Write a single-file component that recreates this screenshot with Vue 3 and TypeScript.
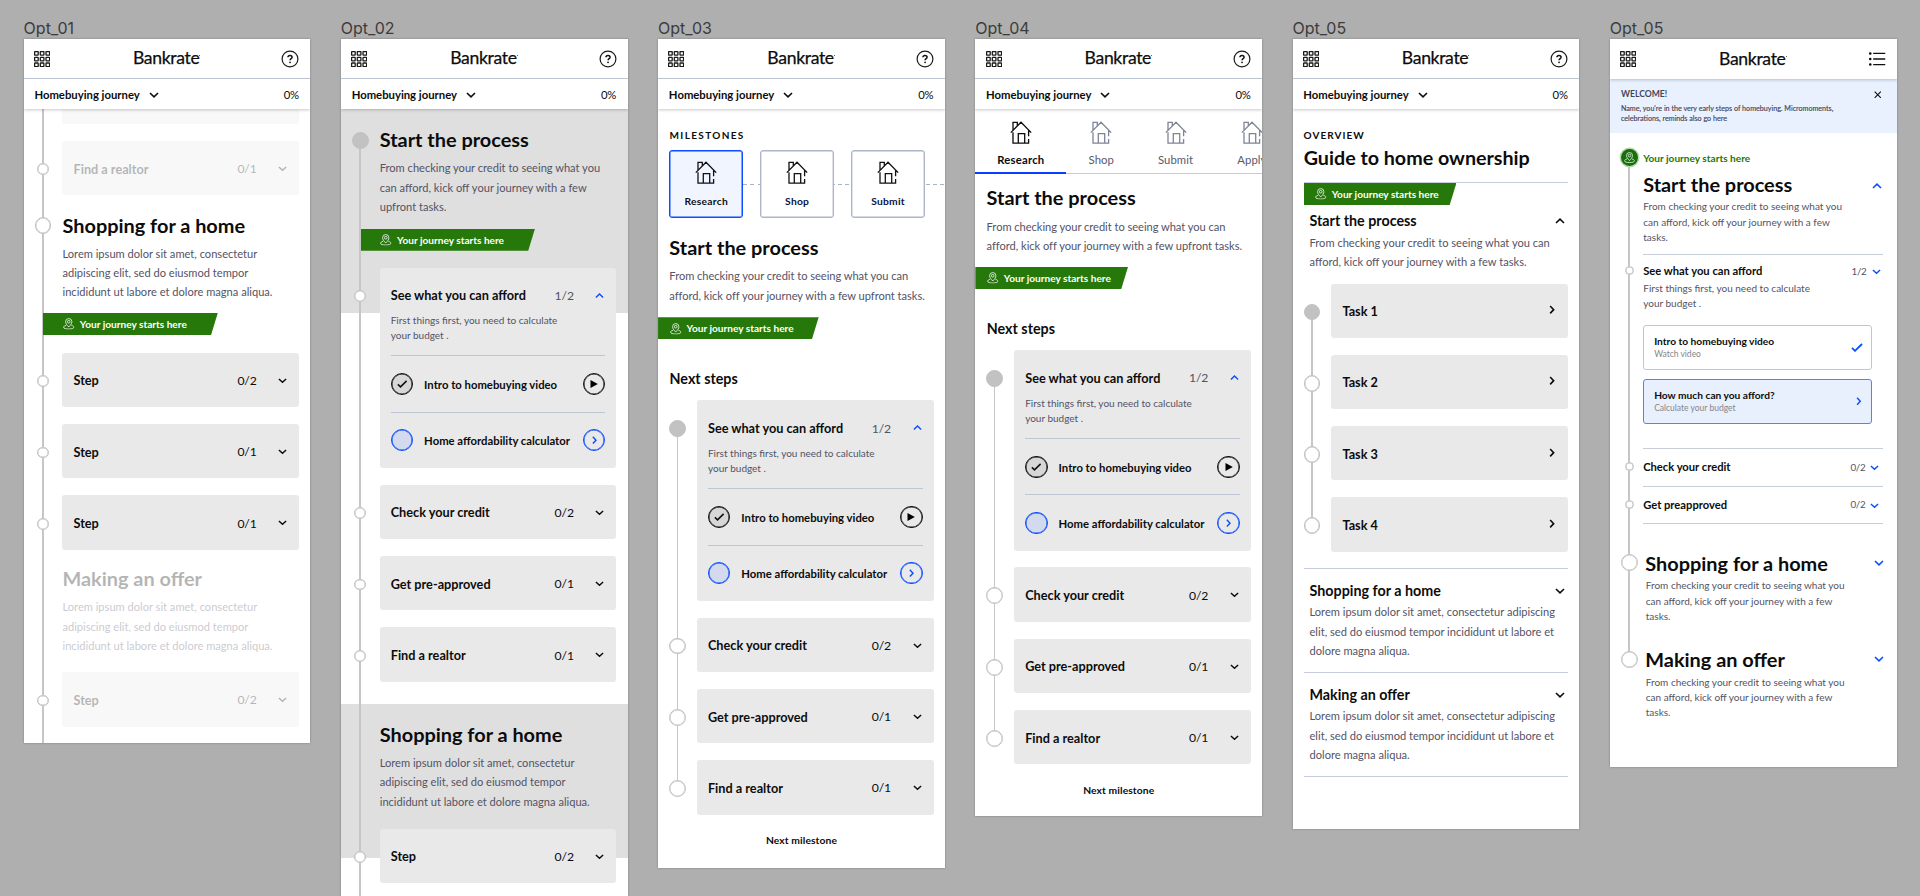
<script setup lang="ts">
interface Step { title: string; count: string; muted?: boolean }

const lorem = ['Lorem ipsum dolor sit amet, consectetur', 'adipiscing elit, sed do eiusmod tempor', 'incididunt ut labore et dolore magna aliqua.']
const loremWide = ['Lorem ipsum dolor sit amet, consectetur adipiscing', 'elit, sed do eiusmod tempor incididunt ut labore et', 'dolore magna aliqua.']
const fromChecking = ['From checking your credit to seeing what you can', 'afford, kick off your journey with a few upfront tasks.']
const fromShort = ['From checking your credit to seeing what you', 'can afford, kick off your journey with a few', 'tasks.']

const shopSteps: Step[] = [
  { title: 'Step', count: '0/2' },
  { title: 'Step', count: '0/1' },
  { title: 'Step', count: '0/1' },
]
const processSteps: Step[] = [
  { title: 'Check your credit', count: '0/2' },
  { title: 'Get pre-approved', count: '0/1' },
  { title: 'Find a realtor', count: '0/1' },
]
const tasks = ['Task 1', 'Task 2', 'Task 3', 'Task 4']
const milestones = ['Research', 'Shop', 'Submit']
const tabs = ['Research', 'Shop', 'Submit', 'Apply']
const sections = ['Shopping for a home', 'Making an offer']
const frames = [
  { id: 1, label: 'Opt_01' },
  { id: 2, label: 'Opt_02' },
  { id: 3, label: 'Opt_03' },
  { id: 4, label: 'Opt_04' },
  { id: 5, label: 'Opt_05' },
  { id: 6, label: 'Opt_05' },
]
</script>

<template>
  <div class="board">
    <svg class="defs" width="0" height="0">
      <symbol id="grid" viewBox="0 0 16 16">
        <g fill="none" stroke="#1b1b1b" stroke-width="1.3">
          <template v-for="y in 3" :key="y">
            <rect v-for="x in 3" :key="x" :x="(x - 1) * 5.7 + 0.6" :y="(y - 1) * 5.7 + 0.6" width="3.6" height="3.6" rx=".5" />
          </template>
        </g>
      </symbol>
      <symbol id="help" viewBox="0 0 18 18">
        <circle cx="9" cy="9" r="7.9" fill="none" stroke="#1b1b1b" stroke-width="1.2" />
        <path d="M6.9 7.3c.1-1.3 1-1.9 2.1-1.9 1.2 0 2.1.7 2.1 1.8 0 1.5-2 1.5-2 3.1" fill="none" stroke="#111" stroke-width="1.5" />
        <circle cx="9.05" cy="12.3" r=".9" fill="#111" />
      </symbol>
      <symbol id="list" viewBox="0 0 17 14">
        <path d="M4.3 1.2H17M4.3 7H17M4.3 12.8H17" stroke="#111" stroke-width="1.3" />
        <circle cx="1.3" cy="1.3" r="1.3" /><circle cx="1.3" cy="7" r="1.3" /><circle cx="1.3" cy="12.7" r="1.3" />
      </symbol>
      <symbol id="down" viewBox="0 0 10 6">
        <path d="M1 1l4 3.8L9 1" fill="none" stroke="currentColor" stroke-width="1.6" />
      </symbol>
      <symbol id="right" viewBox="0 0 6 10">
        <path d="M1 1l3.8 4L1 9" fill="none" stroke="currentColor" stroke-width="1.7" />
      </symbol>
      <symbol id="tick" viewBox="0 0 12 9">
        <path d="M1 4.900l3 2.900L11 1" fill="none" stroke="currentColor" stroke-width="1.8" />
      </symbol>
      <symbol id="cross" viewBox="0 0 8 8">
        <path d="M.7.7l6.600 6.600M7.300.7L.7 7.300" stroke="#111" stroke-width="1.200" />
      </symbol>
      <symbol id="house" viewBox="0 0 22 23">
        <path d="M.8 11.6L11 1.2l10.2 10.4M3 9.3V1.4h4.3v3.2M3 11.2v10.9h15.6v-4M18.6 9.5v5.7M8.3 22V12.7h6.4V22" fill="none" stroke="currentColor" stroke-width="1.3" />
      </symbol>
      <symbol id="pin" viewBox="0 0 12 12">
        <g fill="none" stroke="currentColor" stroke-width=".8">
          <path d="M6 9.4C4 7.2 2.7 5.7 2.7 3.9a3.3 3.3 0 016.6 0C9.300 5.700 8 7.200 6 9.400z" />
          <circle cx="6" cy="3.9" r="1.4" />
          <path d="M3.300 7.600C1.600 8 .6 8.800.6 9.600c0 1.200 2.200 1.900 5.400 1.900s5.400-.7 5.400-1.900c0-.8-1-1.600-2.700-2" />
        </g>
      </symbol>
    </svg>

    <section v-for="f in frames" :key="f.id" class="option">
      <div class="label">{{ f.label }}</div>
      <div class="frame" :class="'frame-' + f.id">
        <header class="top">
          <svg class="i-grid"><use href="#grid" /></svg>
          <span class="logo">Bankrate<i></i></span>
          <svg v-if="f.id !== 6" class="i-help"><use href="#help" /></svg>
          <svg v-else class="i-list"><use href="#list" /></svg>
        </header>
        <div v-if="f.id !== 6" class="journey">
          <b>Homebuying journey</b>
          <svg class="i-down"><use href="#down" /></svg>
          <span>0%</span>
        </div>

        <!-- Continuous timeline, scrolled into the second stage -->
        <div v-if="f.id === 1" class="track full">
          <div class="row muted"><span></span><div class="card clipped"></div></div>
          <div class="row">
            <span class="node"></span>
            <div class="card muted"><div class="head"><b>Find a realtor</b><em>0/1</em><svg class="chev"><use href="#down" /></svg></div></div>
          </div>
          <div class="row intro">
            <span class="node big"></span>
            <div><h2>Shopping for a home</h2><p class="copy"><span v-for="l in lorem" :key="l">{{ l }}</span></p></div>
          </div>
          <div class="ribbon inset"><svg><use href="#pin" /></svg>Your journey starts here</div>
          <div v-for="(s, i) in shopSteps" :key="i" class="row">
            <span class="node"></span>
            <div class="card"><div class="head"><b>{{ s.title }}</b><em>{{ s.count }}</em><svg class="chev"><use href="#down" /></svg></div></div>
          </div>
          <div class="row intro last">
            <span></span>
            <div class="muted"><h2>Making an offer</h2><p class="copy"><span v-for="l in lorem" :key="l">{{ l }}</span></p></div>
          </div>
          <div class="row">
            <span class="node"></span>
            <div class="card muted"><div class="head"><b>Step</b><em>0/2</em><svg class="chev"><use href="#down" /></svg></div></div>
          </div>
        </div>

        <!-- Timeline with shaded stage bands -->
        <div v-if="f.id === 2" class="track banded">
          <div class="band first">
            <div class="row intro">
              <span class="node big on"></span>
              <div>
                <h2>Start the process</h2>
                <p class="copy"><span>From checking your credit to seeing what you</span><span>can afford, kick off your journey with a few</span><span>upfront tasks.</span></p>
              </div>
            </div>
            <div class="ribbon inset"><svg><use href="#pin" /></svg>Your journey starts here</div>
          </div>
          <div class="row lead">
            <span class="node"></span>
            <div class="card">
              <div class="head"><b>See what you can afford</b><em class="soft">1/2</em><svg class="chev up blue"><use href="#down" /></svg></div>
              <p class="note"><span>First things first, you need to calculate</span><span>your budget .</span></p>
              <div class="task"><span class="ring done"><svg class="i-tick"><use href="#tick" /></svg></span><b>Intro to homebuying video</b><span class="ring"><svg class="i-play" viewBox="0 0 8 8"><path d="M.5 0L7.800 4 .5 8z" /></svg></span></div>
              <div class="task"><span class="ring todo"></span><b>Home affordability calculator</b><span class="ring go"><svg class="i-right"><use href="#right" /></svg></span></div>
            </div>
          </div>
          <div v-for="s in processSteps" :key="s.title" class="row">
            <span class="node"></span>
            <div class="card"><div class="head"><b>{{ s.title }}</b><em>{{ s.count }}</em><svg class="chev"><use href="#down" /></svg></div></div>
          </div>
          <div class="band second">
            <div class="row intro">
              <span></span>
              <div><h2>Shopping for a home</h2><p class="copy"><span v-for="l in lorem" :key="l">{{ l }}</span></p></div>
            </div>
          </div>
          <div class="row lead">
            <span class="node"></span>
            <div class="card"><div class="head"><b>Step</b><em>0/2</em><svg class="chev"><use href="#down" /></svg></div></div>
          </div>
        </div>

        <!-- Milestone cards / tabs with a step list -->
        <template v-if="f.id === 3 || f.id === 4">
          <template v-if="f.id === 3">
            <h4>MILESTONES</h4>
            <div class="stones">
              <div v-for="(m, i) in milestones" :key="m" class="stone" :class="{ on: i === 0 }"><svg class="i-house"><use href="#house" /></svg><b>{{ m }}</b></div>
            </div>
          </template>
          <div v-else class="tabs">
            <div v-for="(t, i) in tabs" :key="t" class="tab" :class="['w' + i, { on: i === 0 }]"><svg class="i-house"><use href="#house" /></svg><span>{{ t }}</span></div>
          </div>
          <div class="lede">
            <h2>Start the process</h2>
            <p class="copy"><span v-for="l in fromChecking" :key="l">{{ l }}</span></p>
          </div>
          <div class="ribbon"><svg><use href="#pin" /></svg>Your journey starts here</div>
          <h3 class="next">Next steps</h3>
          <div class="track linked">
            <div class="row">
              <span class="node big on"></span>
              <div class="card">
                <div class="head"><b>See what you can afford</b><em class="soft">1/2</em><svg class="chev up blue"><use href="#down" /></svg></div>
                <p class="note"><span>First things first, you need to calculate</span><span>your budget .</span></p>
                <div class="task"><span class="ring done"><svg class="i-tick"><use href="#tick" /></svg></span><b>Intro to homebuying video</b><span class="ring"><svg class="i-play" viewBox="0 0 8 8"><path d="M.5 0L7.800 4 .5 8z" /></svg></span></div>
                <div class="task"><span class="ring todo"></span><b>Home affordability calculator</b><span class="ring go"><svg class="i-right"><use href="#right" /></svg></span></div>
              </div>
            </div>
            <div v-for="s in processSteps" :key="s.title" class="row">
              <span class="node big"></span>
              <div class="card"><div class="head"><b>{{ s.title }}</b><em>{{ s.count }}</em><svg class="chev"><use href="#down" /></svg></div></div>
            </div>
          </div>
          <div class="more">Next milestone</div>
        </template>

        <!-- Accordion overview -->
        <template v-if="f.id === 5">
          <h4>OVERVIEW</h4>
          <h2 class="guide">Guide to home ownership</h2>
          <div class="acc open">
            <div class="ribbon"><svg><use href="#pin" /></svg>Your journey starts here</div>
            <div class="acc-head"><h3>Start the process</h3><svg class="i-acc up"><use href="#down" /></svg></div>
            <p class="copy"><span>From checking your credit to seeing what you can</span><span>afford, kick off your journey with a few tasks.</span></p>
          </div>
          <div class="track linked">
            <div v-for="(t, i) in tasks" :key="t" class="row">
              <span class="node big" :class="{ on: i === 0 }"></span>
              <div class="card"><div class="head"><b>{{ t }}</b><svg class="i-go"><use href="#right" /></svg></div></div>
            </div>
          </div>
          <div v-for="s in sections" :key="s" class="acc">
            <div class="acc-head"><h3>{{ s }}</h3><svg class="i-acc"><use href="#down" /></svg></div>
            <p class="copy"><span v-for="l in loremWide" :key="l">{{ l }}</span></p>
          </div>
          <div class="end-rule"></div>
        </template>

        <!-- Compact list with welcome banner -->
        <template v-if="f.id === 6">
          <div class="banner">
            <div><strong>WELCOME!</strong><p><span>Name, you're in the very early steps of homebuying. Micromoments,</span><span>celebrations, reminds also go here</span></p></div>
            <svg class="i-cross"><use href="#cross" /></svg>
          </div>
          <div class="track compact">
            <div class="crow start"><span class="here"><svg><use href="#pin" /></svg></span><b>Your journey starts here</b></div>
            <div class="crow stage"><span></span><h2>Start the process</h2><svg class="i-acc up blue"><use href="#down" /></svg></div>
            <p class="mini"><span v-for="l in fromShort" :key="l">{{ l }}</span></p>
            <div class="crow item tall"><span class="node tiny"></span><b>See what you can afford</b><em>1/2</em><svg class="chev blue"><use href="#down" /></svg></div>
            <p class="mini tight"><span>First things first, you need to calculate</span><span>your budget .</span></p>
            <div class="tile"><div><b>Intro to homebuying video</b><small>Watch video</small></div><svg class="i-check"><use href="#tick" /></svg></div>
            <div class="tile hot"><div><b>How much can you afford?</b><small>Calculate your budget</small></div><svg class="i-next"><use href="#right" /></svg></div>
            <div class="items">
              <div class="crow item"><span class="node tiny"></span><b>Check your credit</b><em>0/2</em><svg class="chev blue"><use href="#down" /></svg></div>
              <div class="crow item"><span class="node tiny"></span><b>Get preapproved</b><em>0/2</em><svg class="chev blue"><use href="#down" /></svg></div>
            </div>
            <div v-for="s in sections" :key="s" class="later">
              <div class="crow stage"><span class="node big"></span><h2>{{ s }}</h2><svg class="i-acc blue"><use href="#down" /></svg></div>
              <p class="mini"><span v-for="l in fromShort" :key="l">{{ l }}</span></p>
            </div>
          </div>
        </template>
      </div>
    </section>
  </div>
</template>

<style>
html, body { margin: 0; background: #afafaf; overflow: hidden; }
</style>

<style scoped>
.board { width: 1920px; height: 896px; box-sizing: border-box; padding-left: 23.6px; display: flex; align-items: flex-start; gap: 30.45px; overflow: hidden; background: #afafaf; font-family: Lato, "Liberation Sans", sans-serif; color: #0c0c0c; white-space: nowrap; }
.defs { position: absolute; }
svg { display: block; flex: none; overflow: visible; }
h2, h3, h4, p { margin: 0; }
em { font-style: normal; }
p span { display: block; }
.blue { color: #0b4dff !important; }
.up { transform: scaleY(-1); }

.option { width: 286.8px; flex: none; }
.label { height: 39px; box-sizing: border-box; padding-top: 18px; font: 400 16px/21px Inter, sans-serif; color: #3c3c3c; }
.frame { background: #fff; overflow: hidden; box-shadow: 0 0 2px rgba(0, 0, 0, .3); display: flow-root; }
.frame-1 { height: 703.5px; }
.frame-2 { height: 900px; }
.frame-3 { height: 829px; }
.frame-4 { height: 777px; }
.frame-5 { height: 790px; }
.frame-6 { height: 727.5px; }

.top { height: 40px; box-sizing: border-box; border-bottom: 1px solid #c3cdda; display: flex; align-items: center; padding: 0 11px 0 10.3px; }
.i-grid { width: 16px; height: 16px; }
.logo { flex: 1; padding-left: 83px; font-size: 17.6px; line-height: 24px; letter-spacing: -.34px; margin-top: -1px; -webkit-text-stroke: .25px #111; }
.logo i { display: inline-block; width: 1px; height: 1px; background: #666; vertical-align: 8px; }
.i-help { width: 18px; height: 18px; }
.i-list { width: 16.5px; height: 14px; }
.journey { position: relative; z-index: 3; height: 30px; background: #fff; box-shadow: 0 1px 3px rgba(0, 0, 0, .22); display: flex; align-items: center; padding: 0 11.5px 0 10.8px; font-size: 11.3px; }
.journey span { margin-left: auto; letter-spacing: -.2px; }
.i-down { width: 10px; height: 6px; margin: 1px 0 0 9px; }

h2 { font-size: 19.9px; line-height: 26px; font-weight: 700; }
h3 { font-size: 14.3px; line-height: 20px; font-weight: 700; }
h4 { font-size: 10px; line-height: 14px; font-weight: 700; letter-spacing: 1.35px; margin: 19px 0 0 11.5px; }
.frame-5 h4 { letter-spacing: 1.05px; margin-left: 11px; }
.copy { font-size: 11.1px; line-height: 19.33px; color: #535365; margin-top: 6.2px; }

.track { position: relative; z-index: 1; }
.track::before { content: ""; position: absolute; z-index: -1; left: 18.6px; width: 1.6px; top: 0; bottom: 0; background: #c6c6c6; }
.row { display: grid; grid-template-columns: 38.9px 236.6px; align-items: start; }
.row + .row { margin-top: 16.9px; }
.node { box-sizing: border-box; width: 11.6px; height: 11.6px; border: 1px solid #c2c2c2; box-shadow: inset 0 0 0 .5px #c2c2c2; border-radius: 50%; background: #fff; justify-self: center; margin-top: 22.6px; }
.node.big { width: 16.8px; height: 16.8px; margin-top: 20px; }
.node.on { background: #c2c2c2; }
.node.tiny { width: 9px; height: 9px; margin-top: 0; }
.card { background: #e9e9e9; border-radius: 3px; min-height: 54.4px; }
.muted { opacity: .3; }
.head { height: 54.4px; display: flex; align-items: center; padding: 1px 12px 0 11px; box-sizing: border-box; }
.head b { flex: 1; font-size: 12.7px; }
.head em { font-size: 12.2px; letter-spacing: -.15px; margin-right: 21.5px; }
.head em.soft { color: #535365; }
.chev { width: 9px; height: 5.4px; }
.note { padding: 0 11px; margin-top: -9px; font-size: 10px; line-height: 15.3px; color: #535365; height: 42.6px; }
.task { margin: 0 11px; height: 56.2px; box-sizing: border-box; border-top: 1px solid #bfc6d3; display: flex; align-items: center; }
.task b { flex: 1; font-size: 11.3px; margin: 1px 0 0 11px; }
.ring { width: 22.4px; height: 22.4px; box-sizing: border-box; border: 1px solid currentColor; box-shadow: inset 0 0 0 .5px currentColor; color: #111; border-radius: 50%; display: grid; place-items: center; }
.ring.done { background: #d7d7d7; }
.ring.todo { background: #d4daee; color: #0b4dff; }
.ring.go { color: #0b4dff; }
.i-tick { width: 10.5px; height: 8px; }
.i-play { width: 8px; height: 8px; }
.i-right { width: 5px; height: 8.4px; }

.ribbon { width: 160.6px; height: 22.2px; box-sizing: border-box; background: #26780b; color: #fff; clip-path: polygon(0 0, 100% 0, calc(100% - 6.8px) 100%, 0 100%); display: flex; align-items: center; gap: 5.5px; padding-left: 11.5px; font-size: 10.1px; font-weight: 700; }
.ribbon svg { width: 11.5px; height: 11.5px; }
.ribbon.inset { margin-left: 19.2px; width: 175px; padding-left: 20px; }
.frame-4 .ribbon { width: 152.7px; }

.frame-1 .clipped { min-height: 15px; height: 15px; border-radius: 0 0 3px 3px; }
.frame-1 .full { height: 634px; }
.frame-1 .intro .node { margin-top: 5.2px; }
.frame-1 .intro { margin-top: 16.3px; height: 101.5px; }
.frame-1 .ribbon + .row { margin-top: 17.5px; }
.frame-1 .intro.last { margin-top: 15.5px; height: 107px; }
.frame-1 .intro.last + .row { margin-top: 0; }

.banded { height: 830px; }
.banded::before { top: 31px; z-index: 1; }
.banded .node { position: relative; z-index: 2; }
.band { background: #dfdfdf; overflow: hidden; }
.band.first { height: 204px; }
.band.first .intro { margin-top: 17px; height: 102.5px; }
.band.first .node { margin-top: 6px; }
.row.lead { margin-top: -45.5px; }
.band.second { height: 154.5px; margin-top: 22px; }
.band.second .intro { margin-top: 17px; }
.band.second + .row.lead { margin-top: -29.7px; }

.stones { display: flex; gap: 16.9px; margin: 8px 0 0 11.2px; position: relative; z-index: 1; }
.stones::before { content: ""; position: absolute; z-index: -1; left: 74px; right: 1px; top: 33.5px; height: 1.5px; background: repeating-linear-gradient(90deg, #a9b3c7 0 4px, transparent 4px 7.3px); }
.stone { width: 74px; height: 68px; flex: none; box-sizing: border-box; border: 1px solid #adb5c9; box-shadow: inset 0 0 0 .4px #adb5c9; border-radius: 3px; background: #fff; display: flex; flex-direction: column; align-items: center; padding-top: 10px; color: #111; }
.stone.on { border-color: #0b4dff; box-shadow: inset 0 0 0 .5px #0b4dff; background: #f1f5ff; }
.stone b { font-size: 10.3px; line-height: 14px; letter-spacing: .25px; margin-top: 10px; color: #0a1440; }
.stone.on b { color: #111; }
.i-house { width: 22px; height: 23px; }
.tabs { display: flex; height: 65px; box-sizing: border-box; border-bottom: 1px solid #c3cdda; }
.tab { flex: none; display: flex; flex-direction: column; align-items: center; padding-top: 12px; height: 65px; box-sizing: border-box; font-size: 11.3px; line-height: 15px; letter-spacing: .12px; color: #565a6e; }
.tab .i-house { color: #7f8497; }
.tab span { margin-top: 8px; }
.tab.on { border-bottom: 2px solid #0b3fff; font-weight: 700; color: #0c0c0c; letter-spacing: .2px; }
.tab.on .i-house { color: #0c0c0c; }
.w0 { width: 91px; }
.w1 { width: 70px; }
.w2 { width: 78.6px; }
.w3 { width: 74px; }
.lede { margin: 15.7px 0 0 11.3px; height: 83.5px; }
.lede .copy { letter-spacing: -.03px; margin-top: 6.8px; }
.frame-4 .lede { margin-top: 10px; height: 83px; }
.next { margin: 29.5px 0 0 11.5px; height: 31.5px; }
.linked::before { top: 28px; bottom: 28px; }
.more { text-align: center; font-size: 10.3px; font-weight: 700; letter-spacing: .1px; line-height: 14px; margin-top: 18.7px; }

.guide { margin: 2.5px 0 11.5px 11.2px; font-size: 19.7px; }
.acc { margin: 0 11.2px; border-top: 1px solid #c8cede; height: 104px; box-sizing: border-box; }
.acc .ribbon { width: 152.7px; padding-left: 11px; }
.acc.open { height: 101.5px; }
.acc-head { display: flex; align-items: center; justify-content: space-between; padding: 11.7px 3.5px 0 5.8px; }
.open .acc-head { padding-top: 6.2px; }
.acc .copy { margin: 1.4px 0 0 5.8px; }
.i-acc { width: 10px; height: 6px; }
.i-go { width: 6px; height: 9.3px; margin: -3px 1.3px 0 0; }
.linked + .acc { margin-top: 16.5px; }
.end-rule { margin: 0 11.2px; border-top: 1px solid #c8cede; }

.frame-6 .top { border-bottom: 0; position: relative; z-index: 3; background: #fff; box-shadow: 0 1px 3px rgba(60, 70, 100, .3); }
.frame-6 .logo { margin-top: 0; }
.banner { height: 54px; box-sizing: border-box; background: #e9f1fe; padding: 10px 15.5px 0 11.2px; display: flex; justify-content: space-between; color: #44465a; }
.banner strong { display: block; font-size: 8.6px; line-height: 11px; font-weight: 700; }
.banner p { font-size: 7.15px; line-height: 9.6px; margin-top: 4px; -webkit-text-stroke: .15px #44465a; }
.i-cross { width: 7.5px; height: 7.5px; margin-top: 2px; }
.compact { padding-right: 14px; }
.compact::before { top: 25px; height: 502px; bottom: auto; }
.crow { display: grid; grid-template-columns: 33.4px 1fr auto auto; align-items: center; }
.crow > span { justify-self: start; }
.crow .tiny { margin-left: 15px; }
.crow .big { margin: 0 0 0 11px; }
.start { padding-top: 15px; height: 19px; }
.start b { color: #1a7a00; font-size: 10.1px; }
.here { width: 16.8px; height: 16.8px; margin-left: 11px; border-radius: 50%; background: #16700a; color: #fff; box-shadow: 0 0 0 1.5px #b9d9b2; display: grid; place-items: center; }
.here svg { width: 11px; height: 11px; }
.stage { height: 26px; margin-top: 4px; }
.stage .i-acc { margin-right: 1px; margin-top: 4px; }
.mini { margin: 0 0 0 33.5px; font-size: 10px; line-height: 15.3px; color: #535365; }
.compact > .mini { margin-top: 2.3px; }
.item { height: 37.3px; font-size: 11.2px; }
.item em { font-size: 9.8px; letter-spacing: -.3px; color: #535365; margin-right: 5.5px; }
.item .chev { margin-right: 1.6px; margin-top: 2px; }
.item, .items { position: relative; }
.item::before { content: ""; position: absolute; left: 33.4px; right: 0; top: 0; border-top: 1px solid #c8cdda; }
.item.tall { margin-top: 8.4px; height: 26px; padding-top: 4px; }
.compact > .mini.tight { margin-top: -2.6px; }
.tile { margin: 0 10.7px 9px 33.4px; height: 45px; box-sizing: border-box; border: 1px solid #c0c5d3; border-radius: 3px; background: #fff; padding: 0 8px 0 10px; display: flex; align-items: center; justify-content: space-between; }
.tight + .tile { margin-top: 13.2px; }
.tile.hot { border-color: #4f86f7; background: #e9f0fd; }
.tile b { display: block; font-size: 10.2px; line-height: 13px; }
.tile small { display: block; font-size: 8.5px; line-height: 11px; margin-top: 1px; color: #85858c; }
.i-check { width: 12px; height: 9px; color: #0b4dff; }
.i-next { width: 5.5px; height: 8.5px; margin-right: 1.5px; color: #0b4dff; }
.items { margin-top: 24.5px; }
.items .item { margin-right: -.5px; }
.items .item em { margin-right: 4.2px; }
.items .item .chev { margin-right: 4.5px; }
.items::after { content: ""; display: block; margin-left: 33.4px; border-top: 1px solid #c8cdda; }
.later .stage { margin: 0; grid-template-columns: 35.5px 1fr auto; }
.later .stage .i-acc { margin: 0 -1.5px 0 0; }
.later .mini { margin: 2.5px 0 0 36px; height: 68px; }
.items + .later { margin-top: 26px; }
</style>
